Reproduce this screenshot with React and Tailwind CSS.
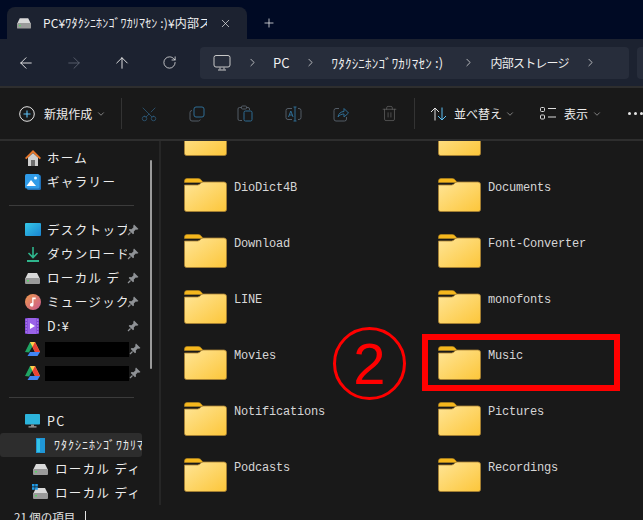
import { ArrowLeft, ArrowRight, ArrowUp, RotateCw, ChevronRight, ChevronDown, Plus, X, Scissors, Trash2 } from "lucide-react";

const JP = "font-['Noto_Sans_CJK_JP','Noto_Sans',sans-serif]";

function Folder() {
  return (
    <svg width="43" height="34" viewBox="0 0 43 34" className="shrink-0">
      <defs>
        <linearGradient id="folderBody" x1="0" y1="0" x2="1" y2="1">
          <stop offset="0" stopColor="#ffe596" />
          <stop offset="1" stopColor="#fcc63a" />
        </linearGradient>
      </defs>
      <path d="M0.5 3a2.5 2.5 0 0 1 2.5-2.5h11c2 0 3 1 4 2.500l1 1.500h-18.500z" fill="#f5b71d" stroke="#b98a20" strokeWidth="0.6" />
      <path d="M0.500 7h13c2.500 0 3.500-3 5.500-3h21a2.500 2.500 0 0 1 2.500 2.500v25a2 2 0 0 1-2 2h-38a2 2 0 0 1-2-2z" fill="url(#folderBody)" stroke="#a98232" strokeWidth="0.8" />
    </svg>
  );
}

function FolderItem({ name }) {
  return (
    <div className="flex h-[56px] w-[254px] items-start gap-[7px]">
      <Folder />
      <span className="mt-[2px] font-['Liberation_Mono',monospace] text-[12px] leading-[16px] tracking-[-0.2px] text-[#d6d6d6]">{name}</span>
    </div>
  );
}

function Drive({ size = 15 }) {
  return (
    <svg width={size} height="12" viewBox="0 0 15 12">
      <path d="M3 1h9l3 6H0z" fill="#d9d9d9" />
      <rect y="6" width="15" height="6" rx="1" fill="#9a9a9a" />
      <rect x="2" y="8" width="2" height="1.500" fill="#56d364" />
    </svg>
  );
}

function Pin() {
  return (
    <svg width="12" height="12" viewBox="0 0 12 12">
      <path d="M7 0.500 11.500 5 10 5.800 8.800 5.500 6.800 7.500 7 9.500 6 10.300 1.700 6 2.500 5 4.500 5.200 6.500 3.200 6.200 2z" fill="#8f9296" />
      <path d="M3.500 8.500 1 11" stroke="#8f9296" strokeWidth="1.300" />
    </svg>
  );
}

function HomeIcon() {
  return (
    <svg width="16" height="16" viewBox="0 0 16 16">
      <path d="M3 7.500 8 3l5 4.500V16H3z" fill="#cfcfcf" />
      <rect x="6" y="10" width="4" height="6" fill="#6e6e6e" />
      <path d="M0 8 8 0l8 8-1.300 1.200L8 2.800 1.300 9.200z" fill="#e8772a" />
    </svg>
  );
}

function GalleryIcon() {
  return (
    <svg width="16" height="16" viewBox="0 0 16 16">
      <rect x="2" y="1" width="14" height="15" rx="1.500" fill="#1f6fb5" />
      <rect width="14.500" height="14.500" rx="1.500" fill="#2f9be8" />
      <circle cx="10.500" cy="4" r="1.500" fill="#e8f5ff" />
      <path d="M1.500 12 6 6l5 6z" fill="#fff" />
    </svg>
  );
}

function DesktopIcon() {
  return (
    <svg width="16" height="13" viewBox="0 0 16 13">
      <defs>
        <linearGradient id="desk" x1="0" y1="0" x2="1" y2="1">
          <stop offset="0" stopColor="#35c8e8" />
          <stop offset="1" stopColor="#1a84d0" />
        </linearGradient>
      </defs>
      <rect width="16" height="13" rx="1" fill="url(#desk)" />
    </svg>
  );
}

function DownloadIcon() {
  return (
    <svg width="16" height="16" viewBox="0 0 16 16" fill="none" stroke="#2fb58c" strokeWidth="1.600">
      <path d="M8 1v10M3.500 7 8 11.500 12.500 7" />
      <path d="M2 15h12" strokeWidth="2" />
    </svg>
  );
}

function MusicIcon() {
  return (
    <svg width="16" height="16" viewBox="0 0 16 16">
      <defs>
        <linearGradient id="mus" x1="0" y1="0" x2="1" y2="1">
          <stop offset="0" stopColor="#ee9a4d" />
          <stop offset="1" stopColor="#c9588f" />
        </linearGradient>
      </defs>
      <circle cx="8" cy="8" r="8" fill="url(#mus)" />
      <path d="M7.200 3.500h3.500v1.800H8.500v5.500a1.800 1.800 0 1 1-1.300-1.700z" fill="#fff" />
    </svg>
  );
}

function VideoIcon() {
  return (
    <svg width="14" height="16" viewBox="0 0 14 16">
      <rect width="14" height="16" rx="1" fill="#7a3fd0" />
      <rect x="2.500" y="0" width="9" height="16" fill="#9a63e8" />
      <path d="M5 5l5 3-5 3z" fill="#fff" />
      <path d="M0.700 2h1M0.700 5h1M0.700 8h1M0.700 11h1M0.700 14h1M12.300 2h1M12.300 5h1M12.300 8h1M12.300 11h1M12.300 14h1" stroke="#e6dcff" strokeWidth="1" />
    </svg>
  );
}

function DriveIcon() {
  return (
    <svg width="15" height="14" viewBox="0 0 15 14">
      <path d="M5 0h5L6.500 6 4 10.500 0 10z" fill="#1fa463" />
      <path d="M5 0h5l5 10h-5z" fill="#ffd04b" />
      <path d="M10 6.500 15 10l-2.500 4h-10L5 10h5z" fill="#4285f4" />
      <path d="M10 0l5 10h-5L7.500 5z" fill="#ea4335" />
    </svg>
  );
}

function PcIcon() {
  return (
    <svg width="15" height="14" viewBox="0 0 15 14">
      <rect width="15" height="10.500" rx="0.800" fill="#2cb4dc" />
      <rect x="6" y="10.500" width="3" height="2" fill="#8a8a8a" />
      <rect x="3.500" y="12.300" width="8" height="1.200" fill="#a8a8a8" />
    </svg>
  );
}

function PhoneIcon() {
  return (
    <svg width="9" height="15" viewBox="0 0 9 15">
      <rect width="9" height="15" fill="#1f96d6" />
      <rect x="1" y="1" width="3" height="13" fill="#35c3e6" />
    </svg>
  );
}

function SystemDrive() {
  return (
    <span className="relative flex">
      <Drive />
      <svg width="6" height="6" viewBox="0 0 6 6" className="absolute -left-[1px] -top-[3px]">
        <path d="M0 0h2.600v2.600H0zM3.200 0h2.600v2.600H3.200zM0 3.200h2.600v2.600H0zM3.200 3.200h2.600v2.600H3.200z" fill="#1f9be8" />
      </svg>
    </span>
  );
}

function SideRow({ icon, label, pin, indent = 25, selected, small, hidden }) {
  return (
    <div
      style={{ paddingLeft: indent }}
      className={`flex h-[24px] w-[142px] items-center ${selected ? "rounded-[3px] bg-[#2d2d2d]" : ""}`}
    >
      <span className={`flex shrink-0 items-center ${small ? "w-[18px]" : "w-[22px]"}`}>{icon}</span>
      {hidden ? (
        <span className={`h-[15px] w-[84px] shrink-0 -ml-[2px] bg-black`} />
      ) : (
        <span className={`${JP} min-w-0 flex-1 overflow-hidden whitespace-nowrap ${small ? "text-[12px] tracking-[1px]" : "text-[12.500px] tracking-[1.350px]"} leading-[16px] text-[#ececec]`}>
          {label}
        </span>
      )}
      {pin && (
        <span className="ml-auto flex w-[15px] shrink-0">
          <Pin />
        </span>
      )}
    </div>
  );
}

function Divider() {
  return (
    <div className="flex h-[24px] items-center pl-[9px]">
      <div className="h-px w-[125px] bg-[#3b3b3b]" />
    </div>
  );
}

function Sidebar() {
  return (
    <aside className="relative flex h-full w-[161px] shrink-0 flex-col overflow-hidden border-r-[2px] border-[#262626] pt-[5px]">
      <SideRow icon={<HomeIcon />} label="ホーム" />
      <SideRow icon={<GalleryIcon />} label="ギャラリー" />
      <Divider />
      <SideRow icon={<DesktopIcon />} label="デスクトップ" pin />
      <SideRow icon={<DownloadIcon />} label="ダウンロード" pin />
      <SideRow icon={<Drive />} label="ローカル デ" pin />
      <SideRow icon={<MusicIcon />} label="ミュージック" pin />
      <SideRow icon={<VideoIcon />} label="D:¥" pin />
      <SideRow icon={<DriveIcon />} hidden pin />
      <SideRow icon={<DriveIcon />} hidden pin />
      <Divider />
      <SideRow icon={<PcIcon />} label="PC" />
      <SideRow icon={<PhoneIcon />} label="ﾜﾀｸｼﾆﾎﾝｺﾞﾜｶﾘﾏｾﾝ :)" indent={36} selected small />
      <SideRow icon={<Drive />} label="ローカル ディ" indent={33} />
      <SideRow icon={<SystemDrive />} label="ローカル ディ" indent={33} />
      <div className="absolute left-[150px] top-[19px] h-[209px] w-[2px] rounded-full bg-[#9a9a9a]" />
    </aside>
  );
}

function CmdIcon({ children }) {
  return <span className="flex w-[48px] shrink-0 items-center justify-center text-[#535c66]">{children}</span>;
}

function CommandBar() {
  return (
    <div className={`${JP} flex h-[55px] shrink-0 items-center border-b-[2px] border-t-[2px] border-[#2e2e2e] bg-[#191919] text-[12px] text-[#ececec]`}>
      <svg width="16" height="16" viewBox="0 0 16 16" fill="none" className="ml-[19px] shrink-0">
        <circle cx="8" cy="8" r="7.300" stroke="#e6e6e6" />
        <path d="M8 4.500v7M4.500 8h7" stroke="#5cc0f5" strokeWidth="1.100" />
      </svg>
      <span className="ml-[9px] w-[52px] shrink-0 whitespace-nowrap tracking-[0.1px]">新規作成</span>
      <ChevronDown size={10} strokeWidth={1.500} className="shrink-0 text-[#bdbdbd]" />
      <div className="ml-[15px] h-[31px] w-px shrink-0 bg-[#333333]" />
      <span className="w-[3px] shrink-0" />
      <CmdIcon>
        <Scissors size={18} strokeWidth={1} className="rotate-[-90deg] text-[#2f5f80]" />
      </CmdIcon>
      <CmdIcon>
        <svg width="16" height="16" viewBox="0 0 16 16" fill="none" stroke="currentColor">
          <rect x="5" y="1" width="10" height="10" rx="2" stroke="#2f6d94" />
          <path d="M3 4.500a2 2 0 0 0-2 2V13a2 2 0 0 0 2 2h6.500a2 2 0 0 0 1.800-1.500" />
        </svg>
      </CmdIcon>
      <CmdIcon>
        <svg width="16" height="17" viewBox="0 0 16 17" fill="none" stroke="currentColor">
          <path d="M4 2.500H2.500a1.500 1.500 0 0 0-1.500 1.500v10a1.500 1.500 0 0 0 1.500 1.500H5" />
          <path d="M10 2.500h1a1.500 1.500 0 0 1 1.500 1.500v1" />
          <rect x="4.500" y="1" width="5" height="3" rx="1" />
          <rect x="7" y="6" width="8" height="10" rx="1.500" stroke="#2f6d94" />
        </svg>
      </CmdIcon>
      <CmdIcon>
        <svg width="17" height="16" viewBox="0 0 17 16" fill="none" stroke="currentColor">
          <path d="M7 2.500H3a2 2 0 0 0-2 2v7a2 2 0 0 0 2 2h4M13 2.500h1a2 2 0 0 1 2 2v7a2 2 0 0 1-2 2h-1" />
          <path d="M10 1v14M8.500 1h3M8.500 15h3" stroke="#2f6d94" />
          <path d="M3.500 11 5.800 5l2.300 6M4.300 9h3" stroke="#2f6d94" />
        </svg>
      </CmdIcon>
      <CmdIcon>
        <svg width="16" height="16" viewBox="0 0 16 16" fill="none" stroke="currentColor">
          <path d="M6 2.500H3a2 2 0 0 0-2 2V13a2 2 0 0 0 2 2h8.500a2 2 0 0 0 2-2v-2" />
          <path d="M5 11c.5-3.500 3-5.500 6-5.500V2.500l4.500 4.500L11 11V8c-2.500 0-4.500 1-6 3z" stroke="#2f6d94" />
        </svg>
      </CmdIcon>
      <CmdIcon>
        <Trash2 size={17} strokeWidth={1} className="text-[#666666]" />
      </CmdIcon>
      <div className="ml-[1px] h-[31px] w-px shrink-0 bg-[#333333]" />
      <svg width="17" height="14" viewBox="0 0 17 14" fill="none" className="ml-[15px] shrink-0">
        <path d="M5 13.500V1M1 5l4-4 4 4" stroke="#e0e0e0" />
        <path d="M12 .500V13M8 9l4 4 4-4" stroke="#5cc0f5" />
      </svg>
      <span className="ml-[7px] w-[48px] shrink-0 whitespace-nowrap">並べ替え</span>
      <ChevronDown size={10} strokeWidth={1.500} className="ml-[3px] shrink-0 text-[#bdbdbd]" />
      <svg width="16" height="13" viewBox="0 0 16 13" fill="none" stroke="#dcdcdc" className="ml-[25px] shrink-0">
        <rect x="0.500" y="0.500" width="4" height="4" rx="1" />
        <rect x="0.500" y="8" width="4" height="4" rx="1" />
        <path d="M8 1.500h8M8 10h8" />
      </svg>
      <span className="ml-[8px] w-[24px] shrink-0 whitespace-nowrap">表示</span>
      <ChevronDown size={10} strokeWidth={1.500} className="ml-[4px] shrink-0 text-[#bdbdbd]" />
      <span className="ml-[26px] flex shrink-0 gap-[3px]">
        <i className="h-[3px] w-[3px] rounded-full bg-[#e6e6e6]" />
        <i className="h-[3px] w-[3px] rounded-full bg-[#e6e6e6]" />
        <i className="h-[3px] w-[3px] rounded-full bg-[#e6e6e6]" />
      </span>
    </div>
  );
}

function Crumb() {
  return <ChevronRight size={13} strokeWidth={1.400} className="shrink-0 text-[#e0e0e0]" />;
}

export default function App() {
  const folders = [
    ["", ""],
    ["DioDict4B", "Documents"],
    ["Download", "Font-Converter"],
    ["LINE", "monofonts"],
    ["Movies", "Music"],
    ["Notifications", "Pictures"],
    ["Podcasts", "Recordings"],
  ];

  return (
    <div className="relative flex h-[520px] w-[643px] flex-col overflow-hidden bg-[#191919]">
      {/* tab strip */}
      <div className="flex h-[39px] shrink-0 items-end bg-[#000a24] pl-[7px]">
        <div className="flex h-[32px] w-[240px] shrink-0 items-center rounded-t-[8px] bg-[#1c2230] pl-[10px]">
          <Drive size={14} />
          <span className={`${JP} ml-[12px] w-[164px] overflow-hidden whitespace-nowrap text-[12px] tracking-[0.15px] text-[#f0f0f0]`}>
            PC¥ﾜﾀｸｼﾆﾎﾝｺﾞﾜｶﾘﾏｾﾝ :)¥内部ストレージ
          </span>
          <X size={13} strokeWidth={1.300} className="ml-[12px] text-[#e8e8e8]" />
        </div>
        <Plus size={14} strokeWidth={1.300} className="mb-[9px] ml-[15px] text-[#f0f0f0]" />
      </div>

      {/* nav row */}
      <div className="flex h-[47px] shrink-0 items-center bg-[#1c2230] pl-[17px]">
        <div className="flex w-[183px] shrink-0 items-center gap-[30px]">
          <ArrowLeft size={18} strokeWidth={1.200} className="shrink-0 text-[#f0f0f0]" />
          <ArrowRight size={18} strokeWidth={1.200} className="shrink-0 text-[#5c6270]" />
          <ArrowUp size={18} strokeWidth={1.200} className="shrink-0 text-[#f0f0f0]" />
          <RotateCw size={15} strokeWidth={1.200} className="ml-[1px] shrink-0 text-[#f0f0f0]" />
        </div>
        <div className={`${JP} flex h-[32px] w-[429px] shrink-0 items-center rounded-[4px] bg-[#272d3b] pl-[13px] text-[13px] text-[#f0f0f0]`}>
          <svg width="18" height="16" viewBox="0 0 18 16" fill="none" stroke="#c8c8c8" className="shrink-0">
            <rect x="1" y="0.500" width="16" height="11.500" rx="2" />
            <path d="M7 12.500v2M11 12.500v2M5 15h8" />
          </svg>
          <span className="ml-[15px] flex"><Crumb /></span>
          <span className="ml-[14px]">PC</span>
          <span className="ml-[14px] flex"><Crumb /></span>
          <span className="ml-[15px] w-[130px] shrink-0 whitespace-nowrap text-[13px] tracking-[0.2px]">ﾜﾀｸｼﾆﾎﾝｺﾞﾜｶﾘﾏｾﾝ :)</span>
          <Crumb />
          <span className="ml-[16px] w-[93px] shrink-0 whitespace-nowrap text-[12px] tracking-[-0.8px]">内部ストレージ</span>
          <Crumb />
        </div>
        <div className="ml-[8px] h-[32px] flex-1 rounded-l-[4px] bg-[#272d3b]" />
      </div>

      <CommandBar />

      {/* body */}
      <div className="flex min-h-0 flex-1">
        <Sidebar />
        <main className="min-w-0 flex-1 overflow-hidden pl-[23px]">
          <div className="-mt-[19px] grid grid-cols-[254px_254px]">
            {folders.map(([left, right], i) => (
              <div key={i} className="contents">
                <FolderItem name={left} />
                <FolderItem name={right} />
              </div>
            ))}
          </div>
        </main>
      </div>

      {/* status bar */}
      <div className={`${JP} flex h-[15px] shrink-0 items-start overflow-hidden bg-[#191919] pl-[14px] text-[11.500px] leading-[18px] text-[#e4e4e4]`}>
        <span className="mt-[3px] whitespace-nowrap">21 個の項目</span>
        <span className="ml-[10px] mt-[6px] h-[14px] w-px bg-[#e4e4e4]" />
      </div>

      {/* annotation drawn over the screenshot */}
      <div className="absolute left-[333px] top-[327px] flex h-[73px] w-[73px] items-center justify-center rounded-full border-[3px] border-[#ff0000] font-['Liberation_Sans',sans-serif] text-[58px] leading-none text-[#ff0000]">
        2
      </div>
      <div className="absolute left-[422px] top-[334px] h-[57px] w-[198px] border-[6px] border-[#ff0000]" />
    </div>
  );
}
